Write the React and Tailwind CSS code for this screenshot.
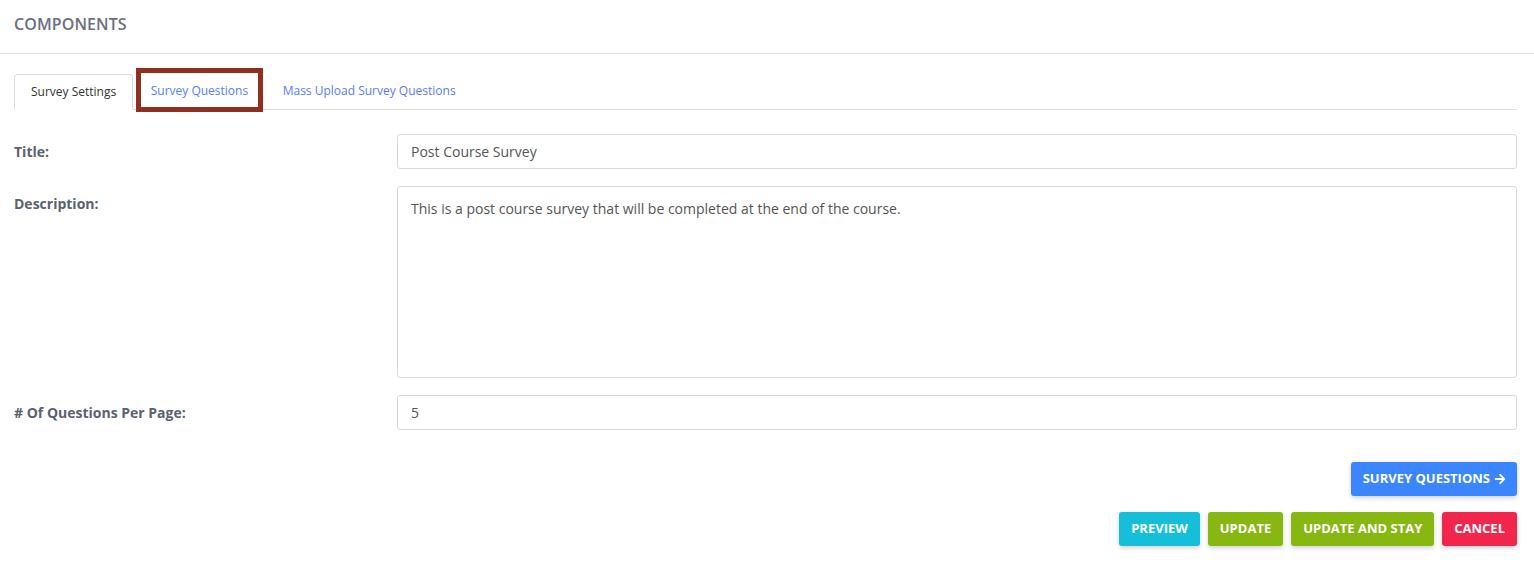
import React from 'react';
import { FaArrowRight } from 'react-icons/fa';

const font = { fontFamily: '"Open Sans", "Liberation Sans", sans-serif' };

const FormRow = ({ label, children, alignTop }) => (
  <div className="flex">
    <label
      className={`w-[383px] shrink-0 text-[14px] font-bold text-[#596270] ${alignTop ? 'pt-[7px]' : 'self-center'}`}
    >
      {label}
    </label>
    <div className="flex-1">{children}</div>
  </div>
);

const btn = 'h-[34px] px-[12px] text-white text-[13px] font-bold rounded-[3px] shadow-[0_2px_5px_rgba(0,0,0,0.18)]';

const App = () => {
  return (
    <div className="min-h-screen bg-white" style={font}>
      <div className="h-[54px] border-b border-[#e3e3e3] px-[14px] pb-[6px] flex items-center">
        <h1 className="text-[16px] font-semibold text-[#6b6f7e] tracking-[0.1px]">COMPONENTS</h1>
      </div>

      <div className="pl-[14px] pr-[17px] pt-[20px]">
        <div className="flex border-b border-[#dddddd] h-[36px] items-end">
          <button className="h-[36px] px-[16px] text-[12px] text-[#333] bg-white border border-[#dddddd] border-b-white rounded-t-[4px] -mb-px">
            Survey Settings
          </button>
          <div className="relative ml-[3px] h-[36px] flex items-center">
            <button className="h-full px-[14.5px] text-[12px] text-[#5a7bfd]">Survey Questions</button>
            <div className="absolute left-0 right-0 -top-[5px] -bottom-[3px] border-[5px] border-[#8e2f1f]" />
          </div>
          <button className="ml-[4px] h-[36px] px-[16px] text-[12px] text-[#5a7bfd]">
            Mass Upload Survey Questions
          </button>
        </div>

        <div className="mt-[24px] flex flex-col gap-[17px]">
          <FormRow label="Title:">
            <input
              readOnly
              value="Post Course Survey"
              className="w-full h-[35px] px-[13px] text-[14px] text-[#555] border border-[#d9d9d9] rounded-[3px] outline-none block"
              style={font}
            />
          </FormRow>
          <FormRow label="Description:" alignTop>
            <textarea
              readOnly
              value="This is a post course survey that will be completed at the end of the course."
              className="w-full h-[192px] px-[13px] py-[11px] text-[14px] text-[#555] border border-[#d9d9d9] rounded-[3px] outline-none resize-none block"
              style={font}
            />
          </FormRow>
          <FormRow label="# Of Questions Per Page:">
            <input
              readOnly
              value="5"
              className="w-full h-[35px] px-[13px] text-[14px] text-[#555] border border-[#d9d9d9] rounded-[3px] outline-none block"
              style={font}
            />
          </FormRow>
        </div>

        <div className="mt-[32px] flex justify-end">
          <button className={`${btn} flex items-center gap-[4px] pl-[12px] pr-[11px] bg-[#3b86fe]`}>
            SURVEY QUESTIONS <FaArrowRight className="w-[12px] h-[12px]" />
          </button>
        </div>

        <div className="mt-[16px] flex justify-end gap-[8px]">
          <button className={`${btn} bg-[#15bfd9]`}>PREVIEW</button>
          <button className={`${btn} bg-[#86b811]`}>UPDATE</button>
          <button className={`${btn} bg-[#86b811]`}>UPDATE AND STAY</button>
          <button className={`${btn} bg-[#f2264d]`}>CANCEL</button>
        </div>
      </div>
    </div>
  );
};

export default App;
